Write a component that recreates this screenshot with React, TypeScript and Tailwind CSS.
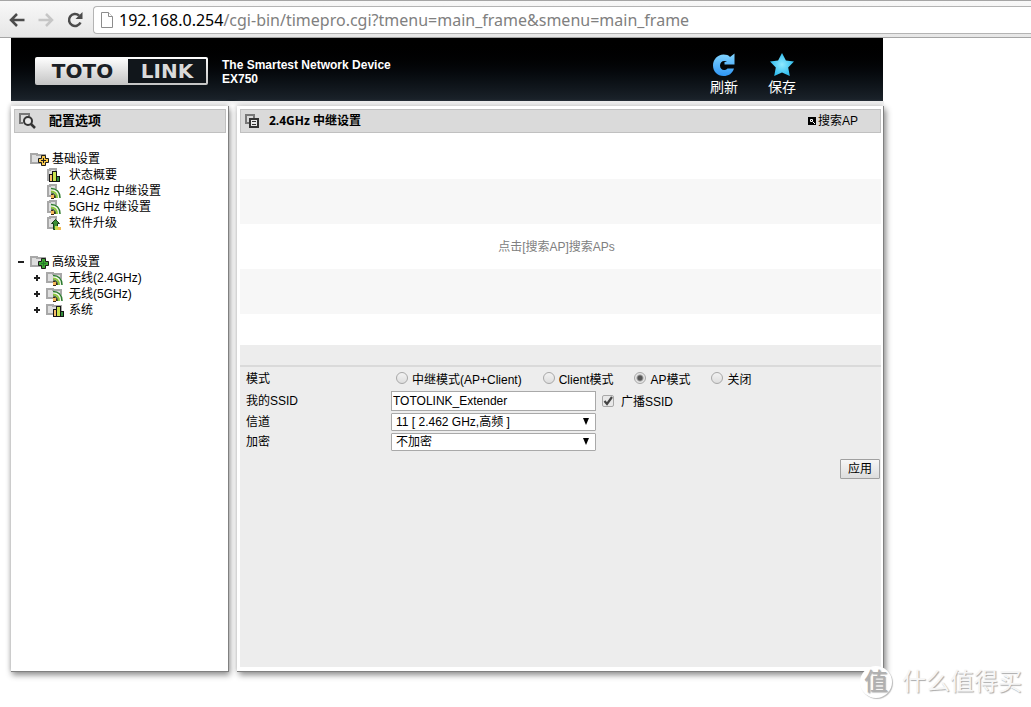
import { useState } from 'react';

type IconName = 'folderUser' | 'folderPlus' | 'chart' | 'wifi' | 'upgrade' | 'folderWifi' | 'folderChart';

const basicItems: { label: string; icon: IconName }[] = [
  { label: '状态概要', icon: 'chart' },
  { label: '2.4GHz 中继设置', icon: 'wifi' },
  { label: '5GHz 中继设置', icon: 'wifi' },
  { label: '软件升级', icon: 'upgrade' },
];

const advancedItems: { label: string; icon: IconName }[] = [
  { label: '无线(2.4GHz)', icon: 'folderWifi' },
  { label: '无线(5GHz)', icon: 'folderWifi' },
  { label: '系统', icon: 'folderChart' },
];

const modes = ['中继模式(AP+Client)', 'Client模式', 'AP模式', '关闭'];

function TreeIcon({ name }: { name: IconName }) {
  const isFolder = name.startsWith('folder');
  const isWifi = name === 'wifi' || name === 'folderWifi';
  const isChart = name === 'chart' || name === 'folderChart';
  const shift = name === 'folderChart' ? 4 : name === 'folderWifi' ? 2 : 0;
  return (
    <svg width="20" height="16" viewBox="0 0 20 16" className="shrink-0" aria-hidden="true">
      {isFolder ? (
        <path d="M1 3h6v1h8v8H1z" fill="#dedede" stroke="#a8a8a8" strokeWidth="2" />
      ) : (
        <path d="M2 3h2V2h6v11H2z" fill="#dedede" stroke="#a8a8a8" strokeWidth="2" />
      )}
      {(name === 'folderUser' || name === 'folderPlus') && (
        <path
          d="M11.500 4.500h4v3h3v4h-3v3h-4v-3h-3v-4h3z"
          fill={name === 'folderUser' ? '#f8c84c' : '#3fa535'}
          stroke="#1c1c1c"
        />
      )}
      {name === 'folderUser' && <path d="M13 7h1v2h2v1h-2v2h-1v-2h-2V9h2z" fill="#1c1c1c" />}
      {name === 'folderPlus' && <path d="M13 7h1v2h2v1h-2v2h-1v-2h-2V9h2z" fill="#237d2a" />}
      {isChart && (
        <g transform={`translate(${shift} 0)`} stroke="#151515">
          <rect x="3.500" y="7.500" width="3" height="7" fill="#f6bd68" />
          <rect x="6.500" y="4.500" width="4" height="10" fill="#c8e34d" />
          <rect x="10.500" y="9.500" width="3" height="5" fill="#318c3b" />
        </g>
      )}
      {isWifi && (
        <g transform={`translate(${shift} 0)`} fill="none">
          <path d="M5 5c6 0 10 4 10 10h-4c0-3-3-6-6-6z" fill="#f3f8e6" />
          <path d="M5 5.500c5.500 0 9 3.500 9 9.500" stroke="#2b7a31" strokeWidth="1.500" />
          <path d="M5 8.500c3.500 0 6 2.500 6 6.500" stroke="#8cc63c" strokeWidth="2" />
          <path d="M5 10c3 0 4.500 2 4.500 5" stroke="#234f1d" />
          <path d="M5 12h3v3H5z" fill="#f5b85a" />
          <path d="M5 11.500h2.500M8.500 12.500V15M5 15.500h3" stroke="#3a2a16" />
        </g>
      )}
      {name === 'upgrade' && (
        <>
          <path d="M9.500 4.500l4 4h-2v6h-4v-6h-2z" fill="#3a8f36" stroke="#163d18" />
          <path d="M9 11h3v1h3v3H9z" fill="#c8dc50" />
          <path d="M12 12h3v3h-3z" fill="#f0bb55" />
        </>
      )}
    </svg>
  );
}

function Tree({ items, expandable }: { items: { label: string; icon: IconName }[]; expandable?: boolean }) {
  return (
    <ul className="pl-4">
      {items.map((item) => (
        <li key={item.label} className="flex h-4 items-center">
          <Expander sign={expandable ? '+' : ''} />
          <a href="#" className="flex items-center gap-[3px] whitespace-nowrap">
            <TreeIcon name={item.icon} />
            {item.label}
          </a>
        </li>
      ))}
    </ul>
  );
}

function Expander({ sign }: { sign: string }) {
  return (
    <span className="flex w-4 shrink-0 items-center pl-1">
      {sign && (
        <svg width="6" height="6" viewBox="0 0 6 6" aria-hidden="true">
          <path d={sign === '+' ? 'M0 2h2V0h2v2h2v2H4v2H2V4H0z' : 'M0 2h6v2H0z'} fill="#222" />
        </svg>
      )}
    </span>
  );
}

function BrowserBar() {
  return (
    <div className="flex h-[38px] items-center border-t border-b border-[#a5a5a5] bg-gradient-to-b from-[#f8f8f8] to-[#e6e6e6] pt-px">
      <div className="flex items-center gap-[13px] pr-[10px] pl-[9px]">
        <button type="button" aria-label="Back">
          <svg width="16" height="14" viewBox="0 0 16 14" fill="none" stroke="#4b4b4b" strokeWidth="2.500">
            <path d="M15.500 7H2M8 1L2 7l6 6" />
          </svg>
        </button>
        <button type="button" aria-label="Forward">
          <svg width="16" height="14" viewBox="0 0 16 14" fill="none" stroke="#c6c6c6" strokeWidth="2.500">
            <path d="M.5 7H14M8 1l6 6-6 6" />
          </svg>
        </button>
        <button type="button" aria-label="Reload">
          <svg width="16" height="16" viewBox="0 0 16 16">
            <path d="M13.500 10.500A6 6 0 1 1 12 3.500" fill="none" stroke="#4b4b4b" strokeWidth="2.500" />
            <path d="M15.500 0v7h-7z" fill="#4b4b4b" />
          </svg>
        </button>
      </div>
      <div className="flex h-7 min-w-0 flex-1 items-center gap-[6px] rounded-l-sm border border-r-0 border-[#b4b4b4] bg-white pl-[7px]">
        <svg width="12" height="16" viewBox="0 0 12 16" fill="#fff" stroke="#8c8c8c" className="shrink-0">
          <path d="M.5.5h7l4 4v11H.5z" />
          <path d="M7.500.5v4h4" />
        </svg>
        <p className="truncate font-['Noto_Sans',sans-serif] text-base text-[#808080]">
          <span className="text-black">192.168.0.254</span>/cgi-bin/timepro.cgi?tmenu=main_frame&amp;smenu=main_frame
        </p>
      </div>
    </div>
  );
}

function Header() {
  return (
    <header className="mr-px flex h-[63px] items-center bg-gradient-to-b from-black to-[#1b232b] text-white">
      <div className="mt-[2px] ml-6 flex h-7 w-[173px] rounded-[2px] bg-gradient-to-b from-white to-[#c4c4c4] p-[2px] font-['DejaVu_Sans',sans-serif] text-xl leading-6 font-bold">
        <span className="flex flex-1 items-center justify-center text-[#1b2026]">TOTO</span>
        <span className="flex w-[78px] items-center justify-center bg-[#11161b] text-[#dadada]">LINK</span>
      </div>
      <div className="mt-1 ml-[14px] text-xs leading-[14px] font-bold">
        <p>The Smartest Network Device</p>
        <p>EX750</p>
      </div>
      <div className="mr-[87px] ml-auto flex gap-[30px] pt-[10px] text-sm leading-5">
        <button type="button" className="flex flex-col items-center">
          <svg width="24" height="24" viewBox="0 0 24 24">
            <defs>
              <linearGradient id="refreshFill" x1="0" y1="0" x2="0" y2="1">
                <stop offset="0" stopColor="#83d5ff" />
                <stop offset="1" stopColor="#2f96f5" />
              </linearGradient>
            </defs>
            <path
              d="M11.500 1.500c3 0 5 .7 6.500 2.500l4.500-3.500v11h-10V9h2.500c-3-2.500-7-.5-7 3.500 0 4.500 4.500 6 7.500 3H22c-1.500 5-5.500 7.500-10.500 7.500-6 0-10.500-4.500-10.500-10.500S5.500 1.500 11.500 1.500z"
              fill="url(#refreshFill)"
            />
          </svg>
          刷新
        </button>
        <button type="button" className="flex flex-col items-center">
          <svg width="24" height="24" viewBox="0 0 24 24">
            <defs>
              <radialGradient id="starFill">
                <stop offset="0" stopColor="#8fe8ff" />
                <stop offset="1" stopColor="#2fbdee" />
              </radialGradient>
            </defs>
            <path
              d="M12 0l3.900 7.500 8.100 1-5.800 6 1.600 8.500L12 19.500 4.200 23l1.600-8.500L0 8.500l8.100-1z"
              fill="url(#starFill)"
            />
          </svg>
          保存
        </button>
      </div>
    </header>
  );
}

function Sidebar() {
  return (
    <nav className="w-[218px] shrink-0 border-r border-b border-[#808080] bg-white shadow-[1px_3px_6px_#8c8c8c,-1px_-2px_4px_#dcdcdc]">
      <h2 className="mt-[3px] mr-[2px] ml-[3px] flex h-6 items-center gap-[13px] border border-[#c0c0c0] bg-[#dadada] pl-1 text-[13px] font-bold">
        <svg width="17" height="16" viewBox="0 0 17 16" fill="none" aria-hidden="true">
          <path d="M4 10H1V1h9v2" stroke="#777" strokeWidth="2" />
          <circle cx="9" cy="8" r="4" fill="#e8e8e8" stroke="#333" strokeWidth="2" />
          <path d="M12 11l4 4" stroke="#333" strokeWidth="2.500" />
        </svg>
        配置选项
      </h2>
      <div className="mt-[18px] pl-[3px] leading-4">
        <div className="flex h-4 items-center">
          <Expander sign="" />
          <a href="#" className="flex items-center gap-[2px]">
            <TreeIcon name="folderUser" />
            基础设置
          </a>
        </div>
        <Tree items={basicItems} />
        <div className="mt-[23px] flex h-4 items-center">
          <Expander sign="-" />
          <a href="#" className="flex items-center gap-[2px]">
            <TreeIcon name="folderPlus" />
            高级设置
          </a>
        </div>
        <Tree items={advancedItems} expandable />
      </div>
    </nav>
  );
}

function SelectBox({ id, option }: { id: string; option: string }) {
  return (
    <div className="relative w-[205px]">
      <select
        id={id}
        className="block h-[18px] w-full appearance-none rounded-[1px] border border-[#a9a9a9] bg-white pl-1 text-xs leading-4"
      >
        <option>{option}</option>
      </select>
      <svg width="6" height="7" viewBox="0 0 6 7" className="pointer-events-none absolute top-[5px] right-[7px]">
        <path d="M0 0h6L3 7z" fill="#000" />
      </svg>
    </div>
  );
}

function WirelessForm() {
  const [mode, setMode] = useState('AP模式');
  const [ssid, setSsid] = useState('TOTOLINK_Extender');
  const [broadcast, setBroadcast] = useState(true);

  return (
    <form className="flex-1 bg-[#ededed]" onSubmit={(e) => e.preventDefault()}>
      <div className="h-[22px] border-b-2 border-[#dadada]" />
      <div className="grid grid-cols-[145px_1fr] items-center gap-y-[2px] pt-px pl-[6px] leading-[18px]">
        <span>模式</span>
        <div className="flex gap-[21px] pl-[5px] whitespace-nowrap">
          {modes.map((m) => (
            <label key={m} className="flex items-start gap-1">
              <input
                type="radio"
                name="mode"
                checked={mode === m}
                onChange={() => setMode(m)}
                className="mt-1 size-3 appearance-none rounded-full border border-[#a8a8a8] bg-gradient-to-b from-[#f2f2f2] to-[#dedede] checked:bg-[radial-gradient(circle,#555_0_2px,#e6e6e6_4px)]"
              />
              <span className="pt-[3px]">{m}</span>
            </label>
          ))}
        </div>

        <label htmlFor="ssid">我的SSID</label>
        <div className="flex items-center">
          <input
            id="ssid"
            value={ssid}
            onChange={(e) => setSsid(e.target.value)}
            className="h-5 w-[205px] border border-[#a9a9a9] bg-white px-px text-xs"
          />
          <label className="ml-[6px] flex items-center gap-[7px]">
            <span className="relative flex">
              <input
                type="checkbox"
                checked={broadcast}
                onChange={(e) => setBroadcast(e.target.checked)}
                className="peer size-3 appearance-none rounded-[2px] border border-[#a8a8a8] bg-[#e8e8e8]"
              />
              <svg
                width="12"
                height="12"
                viewBox="0 0 12 12"
                className="pointer-events-none absolute inset-0 hidden peer-checked:block"
              >
                <path d="M2.500 6l2.500 3 5-7" fill="none" stroke="#444" strokeWidth="2.200" />
              </svg>
            </span>
            <span className="pt-[2px]">广播SSID</span>
          </label>
        </div>

        <label htmlFor="channel">信道</label>
        <SelectBox id="channel" option="11 [ 2.462 GHz,高频 ]" />

        <label htmlFor="security">加密</label>
        <SelectBox id="security" option="不加密" />
      </div>
      <div className="mt-2 flex justify-end pr-px">
        <button
          type="submit"
          className="h-5 w-10 rounded-[1px] border border-[#a0a0a0] bg-gradient-to-b from-[#f6f6f6] to-[#dddddd] leading-4"
        >
          应用
        </button>
      </div>
    </form>
  );
}

function MainPanel() {
  return (
    <main className="flex min-w-0 flex-1 flex-col border-r border-b border-[#808080] bg-white pt-[3px] pr-[2px] pb-1 pl-[3px] shadow-[2px_3px_6px_#8c8c8c,-1px_-2px_4px_#dcdcdc]">
      <div className="flex h-6 items-center border border-[#c0c0c0] bg-[#dadada] pl-1">
        <svg width="15" height="15" viewBox="0 0 15 15" fill="none" aria-hidden="true">
          <path d="M4 9H1V1h8v3" stroke="#777" strokeWidth="2" />
          <rect x="5" y="5" width="8" height="8" fill="#e8e8e8" stroke="#333" strokeWidth="2" />
          <path d="M7 7.500h4M7 10.500h4" stroke="#333" />
        </svg>
        <h1 className="ml-[9px] font-['Noto_Sans','Noto_Sans_CJK_SC',sans-serif] text-xs font-bold">2.4GHz 中继设置</h1>
        <button type="button" className="mr-[22px] ml-auto flex items-center gap-[2px]">
          <svg width="8" height="8" viewBox="0 0 8 8" aria-hidden="true">
            <rect width="8" height="8" fill="#000" />
            <path d="M2.500 2.500h2v2h-2zM5 5l2 2" fill="none" stroke="#fff" />
          </svg>
          搜索AP
        </button>
      </div>
      <table className="h-[212px] w-full text-center text-[#808080]">
        <tbody>
          <tr className="h-[46px]"><td /></tr>
          <tr className="h-[45px] bg-[#f7f7f7]"><td /></tr>
          <tr className="h-[45px]"><td className="pr-2">点击[搜索AP]搜索APs</td></tr>
          <tr className="h-[45px] bg-[#f7f7f7]"><td /></tr>
          <tr className="h-[31px]"><td /></tr>
        </tbody>
      </table>
      <WirelessForm />
    </main>
  );
}

export default function App() {
  return (
    <div className="relative min-h-screen overflow-hidden bg-white font-['Liberation_Sans','Noto_Sans_CJK_SC',sans-serif] text-xs text-black">
      <BrowserBar />
      <div className="ml-[11px] max-w-[873px]">
        <Header />
        <div className="flex min-h-[571px] gap-[8px] bg-gradient-to-b from-[#ececec] to-white to-[5px] pt-[5px]">
          <Sidebar />
          <MainPanel />
        </div>
      </div>
      <div className="absolute right-[9px] bottom-[9px] flex items-center gap-[10px] text-2xl leading-8 text-[#f6f6f6] [text-shadow:1px_1px_1px_#aaa]">
        <span className="flex size-8 items-center justify-center rounded-full bg-white text-[#b0b0b0] shadow-[1px_1px_1px_#bbb]">
          值
        </span>
        什么值得买
      </div>
    </div>
  );
}
